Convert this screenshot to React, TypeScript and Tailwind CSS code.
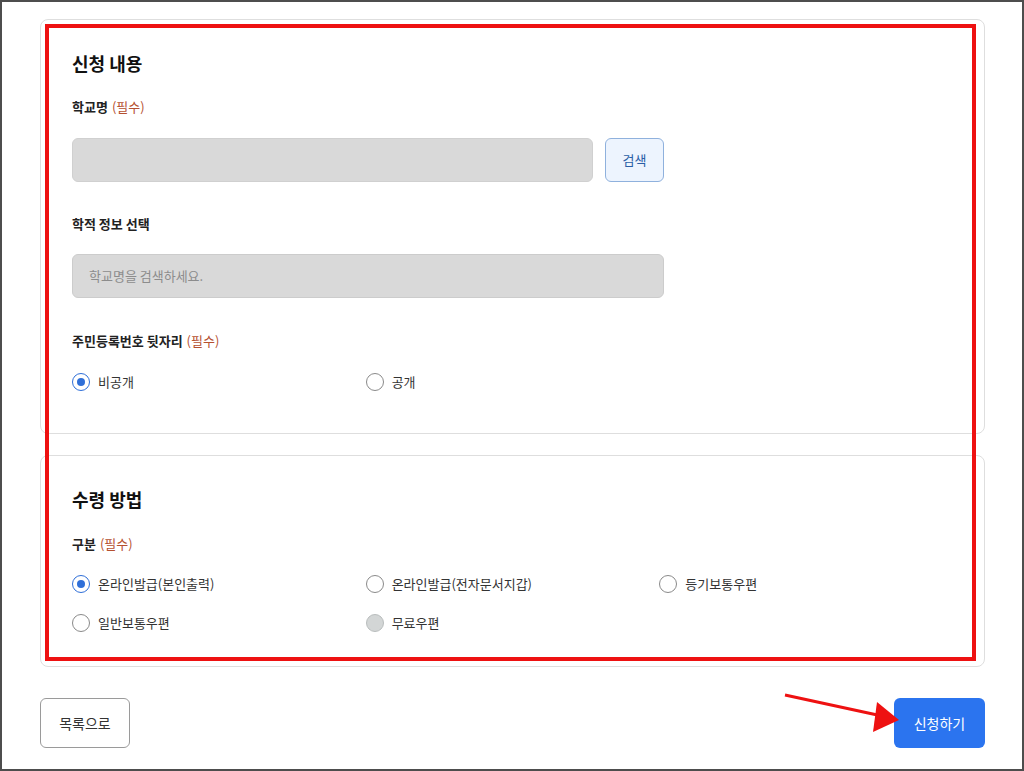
import React from "react";

type Option = { label: string; state?: "checked" | "disabled" };

const Radio = ({ label, state }: Option) => (
  <label className="flex items-center gap-2 h-5 text-[13px] text-[#333]">
    {state === "checked" ? (
      <span className="flex size-[18px] items-center justify-center rounded-full border border-[#2f6fd8] bg-white">
        <span className="size-[8px] rounded-full bg-[#2f6fd8]" />
      </span>
    ) : state === "disabled" ? (
      <span className="size-[18px] rounded-full border border-[#b9bdbd] bg-[#d3d6d6]" />
    ) : (
      <span className="size-[18px] rounded-full border border-[#8a8a8a] bg-white" />
    )}
    <span>{label}</span>
  </label>
);

const Label = ({ text, required }: { text: string; required?: boolean }) => (
  <p className="h-5 leading-5 text-[13px] font-bold text-[#222]">
    {text}
    {required && <span className="ml-1 font-normal text-[#b5502f]">(필수)</span>}
  </p>
);

const Card = ({ children, className }: { children: React.ReactNode; className: string }) => (
  <section className={`w-[945px] rounded-lg border border-[#dedede] bg-white px-[31px] ${className}`}>
    {children}
  </section>
);

export default function App() {
  return (
    <div
      className="relative h-[771px] w-[1024px] overflow-hidden border-2 border-[#4d4d4d] bg-white"
      style={{ fontFamily: '"Noto Sans CJK KR", "Noto Sans", sans-serif' }}
    >
      <div className="flex flex-col pl-[38px] pt-[17px]">
        <Card className="h-[415px] pt-[30px]">
          <h2 className="h-[26px] leading-[26px] text-lg font-bold text-[#111]">신청 내용</h2>
          <div className="mt-[21px]">
            <Label text="학교명" required />
          </div>
          <div className="mt-[21px] flex gap-3">
            <div className="h-11 w-[521px] rounded-md border border-[#d0d0d0] bg-[#d9d9d9]" />
            <button className="h-11 w-[59px] rounded-md border border-[#8fb1dd] bg-[#edf4fe] text-[13px] text-[#2a5ea6]">
              검색
            </button>
          </div>
          <div className="mt-8">
            <Label text="학적 정보 선택" />
          </div>
          <div className="mt-5 flex h-11 w-[592px] items-center rounded-md border border-[#cccccc] bg-[#d9d9d9] px-4 text-[13px] text-[#8c8c8c]">
            학교명을 검색하세요.
          </div>
          <div className="mt-[33px]">
            <Label text="주민등록번호 뒷자리" required />
          </div>
          <div className="mt-[21px] grid grid-cols-3">
            <Radio label="비공개" state="checked" />
            <Radio label="공개" />
          </div>
        </Card>

        <Card className="mt-[21px] h-[212px] pt-[30px]">
          <h2 className="h-[26px] leading-[26px] text-lg font-bold text-[#111]">수령 방법</h2>
          <div className="mt-[22px]">
            <Label text="구분" required />
          </div>
          <div className="mt-5 grid grid-cols-3 gap-y-[19px]">
            <Radio label="온라인발급(본인출력)" state="checked" />
            <Radio label="온라인발급(전자문서지갑)" />
            <Radio label="등기보통우편" />
            <Radio label="일반보통우편" />
            <Radio label="무료우편" state="disabled" />
          </div>
        </Card>

        <div className="mt-[31px] flex w-[945px] justify-between">
          <button className="h-[50px] w-[90px] rounded-md border border-[#9a9a9a] bg-white text-sm text-[#333]">
            목록으로
          </button>
          <button className="h-[50px] w-[91px] rounded-md bg-[#2b74ef] text-sm text-white">
            신청하기
          </button>
        </div>
      </div>

      {/* annotation overlay */}
      <div className="pointer-events-none absolute left-[43px] top-[22px] h-[637px] w-[931px] border-4 border-[#ee1111]" />
      <svg className="pointer-events-none absolute left-0 top-0" width="1024" height="771">
        <line x1="783" y1="693" x2="880" y2="714" stroke="#ee1111" strokeWidth="3" />
        <polygon points="897,718 875,700 871,730" fill="#ee1111" />
      </svg>
    </div>
  );
}
